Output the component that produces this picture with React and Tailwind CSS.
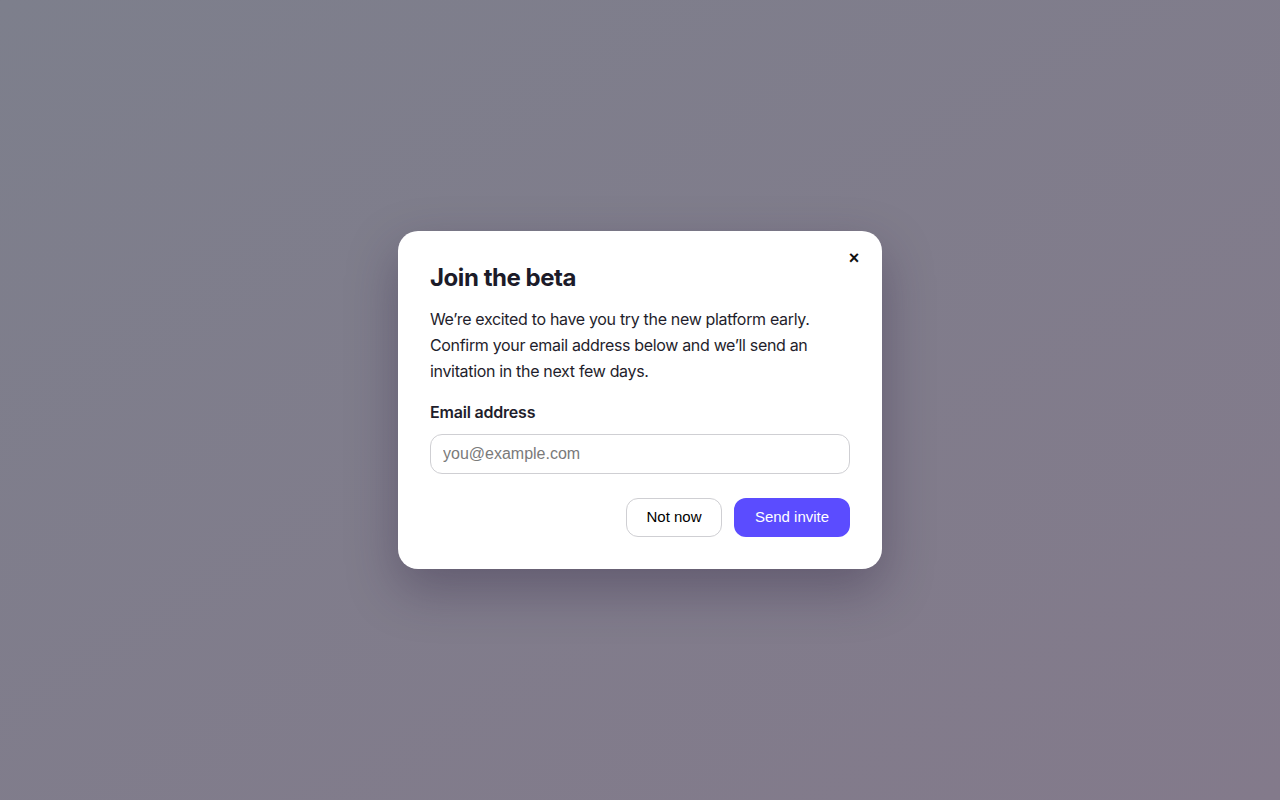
export default function App() {
  return (
    <div className="w-full h-[800px] bg-gradient-to-br from-[#7d7f8c] to-[#837a8b] flex items-center justify-center" style={{ fontFamily: "Inter, 'Noto Sans', sans-serif" }}>
      <div className="relative w-[484px] bg-white rounded-[20px] p-8 shadow-[0_20px_50px_rgba(40,30,60,0.35)]">
        <button className="absolute top-[16px] right-[18px] w-[20px] h-[22px] flex items-center justify-center text-[18px] font-bold text-[#111] leading-none" style={{ fontFamily: "'Liberation Sans', Arial, sans-serif" }}>×</button>
        <h2 className="text-[24px] leading-[30px] font-bold text-[#1c1b29] tracking-[-0.45px]">Join the beta</h2>
        <p className="mt-[13px] text-[16px] leading-[26px] text-[#1f1e2c] tracking-[-0.33px]">
          We’re excited to have you try the new platform early. Confirm your email address below and we’ll send an invitation in the next few days.
        </p>
        <label className="block mt-4 text-[16px] leading-[24px] font-semibold text-[#1f1e2c] tracking-[-0.2px]">Email address</label>
        <input
          type="email"
          placeholder="you@example.com"
          className="mt-[10px] w-full h-[40px] px-3 border border-[#cfcfd3] rounded-xl text-[16px] placeholder:text-[#7a7a7a] outline-none"
          style={{ fontFamily: "'Liberation Sans', Arial, sans-serif" }}
        />
        <div className="mt-6 flex justify-end gap-3" style={{ fontFamily: "'Liberation Sans', Arial, sans-serif" }}>
          <button className="h-[39px] w-[96px] border border-[#cfcfd3] rounded-xl bg-white text-[15px] text-black">Not now</button>
          <button className="h-[39px] w-[116px] rounded-xl bg-[#5b4cff] text-[15px] text-white">Send invite</button>
        </div>
      </div>
    </div>
  );
}
